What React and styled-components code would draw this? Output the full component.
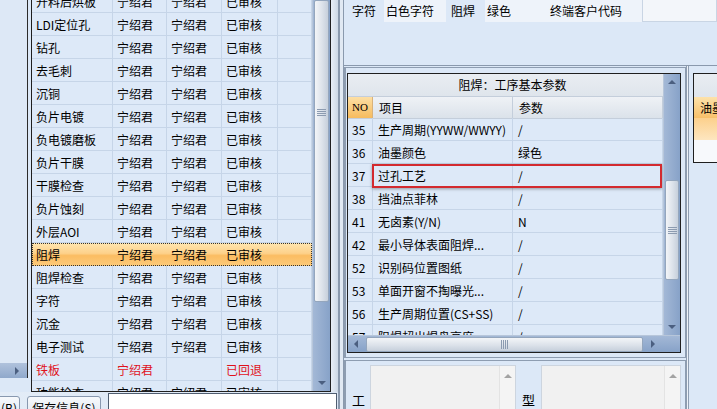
import React from 'react';
import styled, { createGlobalStyle } from 'styled-components';

const GlobalStyle = createGlobalStyle`
  html, body { margin: 0; padding: 0; overflow: hidden; }
  body {
    font-family: "Noto Sans CJK SC", "Liberation Sans", sans-serif;
    font-size: 12px;
    color: #000;
    background: #dce8f7;
  }
`;

const processRows = [
  { name: '开料后烘板', a: '宁绍君', b: '宁绍君', s: '已审核' },
  { name: 'LDI定位孔', a: '宁绍君', b: '宁绍君', s: '已审核' },
  { name: '钻孔', a: '宁绍君', b: '宁绍君', s: '已审核' },
  { name: '去毛刺', a: '宁绍君', b: '宁绍君', s: '已审核' },
  { name: '沉铜', a: '宁绍君', b: '宁绍君', s: '已审核' },
  { name: '负片电镀', a: '宁绍君', b: '宁绍君', s: '已审核' },
  { name: '负电镀磨板', a: '宁绍君', b: '宁绍君', s: '已审核' },
  { name: '负片干膜', a: '宁绍君', b: '宁绍君', s: '已审核' },
  { name: '干膜检查', a: '宁绍君', b: '宁绍君', s: '已审核' },
  { name: '负片蚀刻', a: '宁绍君', b: '宁绍君', s: '已审核' },
  { name: '外层AOI', a: '宁绍君', b: '宁绍君', s: '已审核' },
  { name: '阻焊', a: '宁绍君', b: '宁绍君', s: '已审核', selected: true },
  { name: '阻焊检查', a: '宁绍君', b: '宁绍君', s: '已审核' },
  { name: '字符', a: '宁绍君', b: '宁绍君', s: '已审核' },
  { name: '沉金', a: '宁绍君', b: '宁绍君', s: '已审核' },
  { name: '电子测试', a: '宁绍君', b: '宁绍君', s: '已审核' },
  { name: '铁板', a: '宁绍君', b: '', s: '已回退', red: true },
  { name: '功能检查', a: '宁绍君', b: '宁绍君', s: '已审核' },
];

const params = [
  ['35', '生产周期(YYWW/WWYY)', '/'],
  ['36', '油墨颜色', '绿色'],
  ['37', '过孔工艺', '/'],
  ['38', '挡油点菲林', '/'],
  ['41', '无卤素(Y/N)', 'N'],
  ['42', '最小导体表面阻焊...', '/'],
  ['52', '识别码位置图纸', '/'],
  ['53', '单面开窗不掏曝光...', '/'],
  ['56', '生产周期位置(CS+SS)', '/'],
  ['57', '阻焊超出焊盘高度...', '/'],
];

const Page = styled.div`
  width: 717px;
  height: 409px;
  display: flex;
  overflow: hidden;
  background: #dce8f7;
`;

/* ---------- arrows & scroll parts ---------- */
const Arrow = styled.span`
  display: block;
  width: 0;
  height: 0;
  flex-shrink: 0;
  ${({ $dir, $c = '#4b5f80' }) =>
    ({
      up: `border-left:4px solid transparent;border-right:4px solid transparent;border-bottom:4px solid ${$c};`,
      down: `border-left:4px solid transparent;border-right:4px solid transparent;border-top:4px solid ${$c};`,
      left: `border-top:4px solid transparent;border-bottom:4px solid transparent;border-right:4px solid ${$c};`,
      right: `border-top:4px solid transparent;border-bottom:4px solid transparent;border-left:4px solid ${$c};`,
    })[$dir]}
`;

const VScroll = styled.div`
  width: ${p => p.$w || 17}px;
  flex-shrink: 0;
  display: flex;
  flex-direction: column;
  background: linear-gradient(90deg, #a3b8d6, #87a2c8);
  border-left: 1px solid #b7c6da;
  box-sizing: border-box;
`;

const VTrack = styled.div`
  height: ${p => (p.$h ? `${p.$h}px` : 'auto')};
  flex: ${p => (p.$h ? '0 0 auto' : '1')};
  display: flex;
  flex-direction: column;
  align-items: center;
  justify-content: ${p => (p.$end ? 'flex-end' : 'flex-start')};
  padding: 6px 0;
  box-sizing: border-box;
`;

const VThumb = styled.div`
  height: ${p => p.$h}px;
  flex-shrink: 0;
  margin: 0 1px;
  box-sizing: border-box;
  border: 1px solid #94a6bd;
  border-radius: 2px;
  background: linear-gradient(90deg, #f3f5f8, #dce2ea 55%, #c6cfdb);
  display: flex;
  justify-content: center;
  align-items: ${p => (p.$gripTop ? 'flex-start' : 'center')};
  padding-top: ${p => p.$gripTop || 0}px;
`;

const VGrip = styled.div`
  width: 9px;
  height: 7px;
  background: repeating-linear-gradient(180deg, #8c9bb0 0 1px, transparent 1px 2px);
`;

const HScroll = styled.div`
  height: 17px;
  flex-shrink: 0;
  display: flex;
  align-items: center;
  padding-left: 6px;
  background: linear-gradient(180deg, #a3b8d6, #87a2c8);
  border-top: 1px solid #b7c6da;
  box-sizing: border-box;
`;

const HThumb = styled.div`
  width: ${p => p.$w}px;
  height: 15px;
  margin: 0 8px;
  box-sizing: border-box;
  border: 1px solid #94a6bd;
  border-radius: 2px;
  background: linear-gradient(180deg, #f3f5f8, #dce2ea 55%, #c6cfdb);
  display: flex;
  justify-content: center;
  align-items: center;
`;

const HGrip = styled.div`
  width: 7px;
  height: 9px;
  background: repeating-linear-gradient(90deg, #8c9bb0 0 1px, transparent 1px 2px);
`;

/* ---------- left column ---------- */
const LeftCol = styled.div`
  width: 338px;
  flex-shrink: 0;
  display: flex;
  flex-direction: column;
`;

const LeftTop = styled.div`
  height: 392px;
  display: flex;
`;

const Strip = styled.div`
  width: 28px;
  height: 378px;
  flex-shrink: 0;
  box-sizing: border-box;
  border-right: 1px solid #2b2b2b;
  background: #dde8f6;
  display: flex;
  flex-direction: column;
  justify-content: flex-end;
`;

const StripScroll = styled.div`
  height: 15px;
  display: flex;
  align-items: center;
  justify-content: flex-end;
  padding-right: 8px;
  background: linear-gradient(180deg, #b0c2dc, #8fa8cb);
`;

const ProcGrid = styled.div`
  margin-left: 3px;
  width: 300px;
  height: 392px;
  flex-shrink: 0;
  box-sizing: border-box;
  border: 1px solid #1f1f1f;
  border-top: none;
  display: flex;
  background: #dde9f8;
  overflow: hidden;
`;

const GridContent = styled.div`
  flex: 1;
  overflow: hidden;
  position: relative;
`;

const Rows = styled.div`
  margin-top: ${p => p.$offset || 0}px;
`;

const ProcRow = styled.div`
  display: grid;
  grid-template-columns: 81px 54px 55px 56px 1fr;
  height: 23px;
  color: ${p => (p.$red ? '#e0111c' : '#000')};
  background: ${p =>
    p.$selected
      ? 'linear-gradient(180deg, #ffe6b0 0%, #fdd18a 45%, #fbbd62 55%, #fcca7a 100%)'
      : 'transparent'};
  outline: ${p => (p.$selected ? '1px dotted #333' : 'none')};
  outline-offset: -1px;
`;

const Cell = styled.div`
  box-sizing: border-box;
  height: 23px;
  padding-left: ${p => p.$pad ?? 4}px;
  line-height: 24px;
  white-space: nowrap;
  overflow: hidden;
  border-right: 1px solid ${p => (p.$plain ? 'transparent' : '#c6d5e8')};
  border-bottom: 1px solid ${p => (p.$plain ? 'transparent' : '#c6d5e8')};
`;

const Sliver = styled.div`
  flex: 1;
  background: linear-gradient(90deg, #e8eef6, #cdd8e5);
`;

const BottomBar = styled.div`
  flex: 1;
  display: flex;
  align-items: flex-start;
  padding-top: 4px;
  background: linear-gradient(90deg, #e3ecf7, #dae5f3);
  overflow: hidden;
`;

const Button = styled.div`
  width: ${p => p.$w}px;
  margin-left: ${p => p.$ml}px;
  height: 20px;
  flex-shrink: 0;
  box-sizing: border-box;
  border: 1px solid #8898af;
  border-radius: 3px;
  background: linear-gradient(180deg, #f7f9fc, #e1e8f1);
  text-align: ${p => p.$align || 'center'};
  padding: 2px 2px 0;
  line-height: 18px;
  white-space: nowrap;
  overflow: hidden;
`;

const TextInput = styled.div`
  margin-left: 7px;
  width: 229px;
  height: 22px;
  flex-shrink: 0;
  margin-top: -3px;
  box-sizing: border-box;
  border: 1px solid #4f5d70;
  background: #fff;
`;

const Splitter = styled.div`
  width: 5px;
  flex-shrink: 0;
  box-sizing: border-box;
  border-left: 2px solid #8a99ad;
  background: #e1e9f3;
`;

/* ---------- right area ---------- */
const RightArea = styled.div`
  flex: 1;
  display: flex;
  flex-direction: column;
  border-left: 1px solid #8a99ad;
  min-width: 0;
`;

const TopFields = styled.div`
  height: 66px;
  flex-shrink: 0;
  box-sizing: border-box;
  border-bottom: 1px solid #8a99ad;
  display: flex;
  align-items: flex-start;
`;

const Field = styled.div`
  width: ${p => p.$w}px;
  height: 22px;
  flex-shrink: 0;
  box-sizing: border-box;
  padding-left: ${p => p.$pad}px;
  line-height: 22px;
  white-space: nowrap;
  background: ${p => (p.$value ? '#eef3fa' : 'transparent')};
`;

const FieldBox = styled.div`
  flex: 1;
  height: 22px;
  box-sizing: border-box;
  border: 1px solid #c9d5e4;
  border-top: none;
  background: #f3f6fa;
`;

const Lower = styled.div`
  flex: 1;
  display: flex;
`;

const LowerMain = styled.div`
  width: 342px;
  flex-shrink: 0;
  display: flex;
  flex-direction: column;
`;

const ParamGroup = styled.div`
  margin-top: 1px;
  height: 291px;
  flex-shrink: 0;
  box-sizing: border-box;
  border: 1px solid #8e9db1;
  border-left-width: 2px;
  padding: 5px 4px 4px 1px;
`;

const ParamGrid = styled.div`
  width: 334px;
  height: 280px;
  box-sizing: border-box;
  border: 1px solid #1f1f1f;
  display: flex;
  flex-direction: column;
  background: #dde9f8;
`;

const ParamBody = styled.div`
  flex: 1;
  display: flex;
  min-height: 0;
`;

const TitleRow = styled.div`
  height: 23px;
  box-sizing: border-box;
  border-bottom: 1px solid #c4cedb;
  background: linear-gradient(180deg, #e9edf2, #dfe5ec);
  text-align: center;
  line-height: 22px;
  padding-left: 14px;
`;

const ParamRow = styled.div`
  display: grid;
  grid-template-columns: 25px 140px 1fr;
  height: ${p => (p.$head ? 21 : 23)}px;
  background: ${p => (p.$head ? 'linear-gradient(180deg, #eff2f6, #dbe2ea)' : 'transparent')};
`;

const HeadNo = styled.div`
  box-sizing: border-box;
  background: linear-gradient(180deg, #fddfa4, #f6bb5e);
  border-right: 1px solid #d9b27a;
  border-bottom: 1px solid #c4cedb;
  text-align: center;
  line-height: 21px;
  font-family: "Liberation Serif", serif;
  font-size: 11px;
`;

const HeadCell = styled.div`
  box-sizing: border-box;
  padding-left: 6px;
  line-height: 21px;
  border-right: 1px solid #c4cedb;
  border-bottom: 1px solid #c4cedb;
`;

const Highlight = styled.div`
  position: absolute;
  left: 24px;
  top: 90px;
  width: 290px;
  height: 24px;
  box-sizing: border-box;
  border: 2px solid #d32a2f;
  box-shadow: 0 1px 3px rgba(0, 0, 0, 0.35);
  pointer-events: none;
`;

const Corner = styled.div`
  margin-left: auto;
  width: 17px;
  height: 100%;
`;

const MemoGroup = styled.div`
  margin-top: 2px;
  flex: 1;
  box-sizing: border-box;
  border: 1px solid #8e9db1;
  border-left-width: 2px;
  border-bottom: none;
  display: flex;
  align-items: flex-start;
  padding-top: 4px;
`;

const MemoLabel = styled.div`
  width: ${p => p.$w}px;
  flex-shrink: 0;
  box-sizing: border-box;
  padding: 25px 0 0 ${p => p.$pad}px;
  font-size: 13px;
`;

const Memo = styled.div`
  width: ${p => p.$w}px;
  height: 60px;
  flex-shrink: 0;
  box-sizing: border-box;
  border: 1px solid #cdd5df;
  background: #f1f1f1;
  display: flex;
  justify-content: flex-end;
`;

const MemoScroll = styled.div`
  width: 16px;
  box-sizing: border-box;
  background: #f4f4f4;
  border-left: 1px solid #e3e3e3;
  display: flex;
  justify-content: center;
  padding-top: 8px;
`;

const SideCol = styled.div`
  flex: 1;
  box-sizing: border-box;
  border-left: 1px solid #8e9db1;
  padding: 7px 0 0 6px;
  box-shadow: inset 1px 0 0 #eef3f9, inset 2px 0 0 #8e9db1;
`;

const InkBox = styled.div`
  height: 90px;
  box-sizing: border-box;
  border: 1px solid #1f1f1f;
  border-right: none;
  display: flex;
  flex-direction: column;
  background: #f7f9fc;
`;

const InkPart = styled.div`
  height: ${p => p.$h}px;
  flex-shrink: 0;
  box-sizing: border-box;
  padding-left: 6px;
  line-height: ${p => p.$h}px;
  white-space: nowrap;
  background: ${p => p.$bg};
`;

export default function App() {
  return (
    <>
      <GlobalStyle />
      <Page>
        <LeftCol>
          <LeftTop>
            <Strip>
              <StripScroll>
                <Arrow $dir="right" />
              </StripScroll>
            </Strip>
            <ProcGrid>
              <GridContent>
                <Rows $offset={-10}>
                  {processRows.map(r => (
                    <ProcRow key={r.name} $selected={r.selected} $red={r.red}>
                      <Cell $plain={r.selected}>{r.name}</Cell>
                      <Cell $plain={r.selected}>{r.a}</Cell>
                      <Cell $plain={r.selected}>{r.b}</Cell>
                      <Cell $plain={r.selected}>{r.s}</Cell>
                      <Cell $plain={r.selected} />
                    </ProcRow>
                  ))}
                </Rows>
              </GridContent>
              <VScroll $w={18}>
                <VThumb $h={302} $gripTop={108}>
                  <VGrip />
                </VThumb>
                <VTrack $end>
                  <Arrow $dir="down" />
                </VTrack>
              </VScroll>
            </ProcGrid>
            <Sliver />
          </LeftTop>
          <BottomBar>
            <Button $w={30} $ml={-10} $align="right">(B)</Button>
            <Button $w={74} $ml={7}>保存信息(S)</Button>
            <TextInput />
          </BottomBar>
        </LeftCol>
        <Splitter />
        <RightArea>
          <TopFields>
            <Field $w={40} $pad={8}>字符</Field>
            <Field $w={62} $pad={2} $value>白色字符</Field>
            <Field $w={39} $pad={5}>阻焊</Field>
            <Field $w={61} $pad={2} $value>绿色</Field>
            <Field $w={96} $pad={4} $value>终端客户代码</Field>
            <FieldBox />
          </TopFields>
          <Lower>
            <LowerMain>
              <ParamGroup>
                <ParamGrid>
                  <ParamBody>
                    <GridContent>
                      <TitleRow>阻焊：工序基本参数</TitleRow>
                      <ParamRow $head>
                        <HeadNo>NO</HeadNo>
                        <HeadCell>项目</HeadCell>
                        <HeadCell>参数</HeadCell>
                      </ParamRow>
                      {params.map(([no, item, val]) => (
                        <ParamRow key={no}>
                          <Cell>{no}</Cell>
                          <Cell $pad={5}>{item}</Cell>
                          <Cell $pad={5}>{val}</Cell>
                        </ParamRow>
                      ))}
                      <Highlight />
                    </GridContent>
                    <VScroll>
                      <VTrack $h={106}>
                        <Arrow $dir="up" />
                      </VTrack>
                      <VThumb $h={100}>
                        <VGrip />
                      </VThumb>
                      <VTrack $end>
                        <Arrow $dir="down" />
                      </VTrack>
                    </VScroll>
                  </ParamBody>
                  <HScroll>
                    <Arrow $dir="left" />
                    <HThumb $w={277}>
                      <HGrip />
                    </HThumb>
                    <Arrow $dir="right" />
                    <Corner />
                  </HScroll>
                </ParamGrid>
              </ParamGroup>
              <MemoGroup>
                <MemoLabel $w={24} $pad={6}>工</MemoLabel>
                <Memo $w={146}>
                  <MemoScroll>
                    <Arrow $dir="up" $c="#a3a3a3" />
                  </MemoScroll>
                </Memo>
                <MemoLabel $w={25} $pad={6}>型</MemoLabel>
                <Memo $w={140}>
                  <MemoScroll>
                    <Arrow $dir="up" $c="#a3a3a3" />
                  </MemoScroll>
                </Memo>
              </MemoGroup>
            </LowerMain>
            <SideCol>
              <InkBox>
                <InkPart $h={23} $bg="linear-gradient(180deg, #e9edf2, #dfe5ec)" />
                <InkPart $h={21} $bg="linear-gradient(180deg, #fde2aa, #f7c06a)">油墨</InkPart>
                <InkPart $h={22} $bg="linear-gradient(180deg, #fcd08c, #fde6c0)" />
              </InkBox>
            </SideCol>
          </Lower>
        </RightArea>
      </Page>
    </>
  );
}
